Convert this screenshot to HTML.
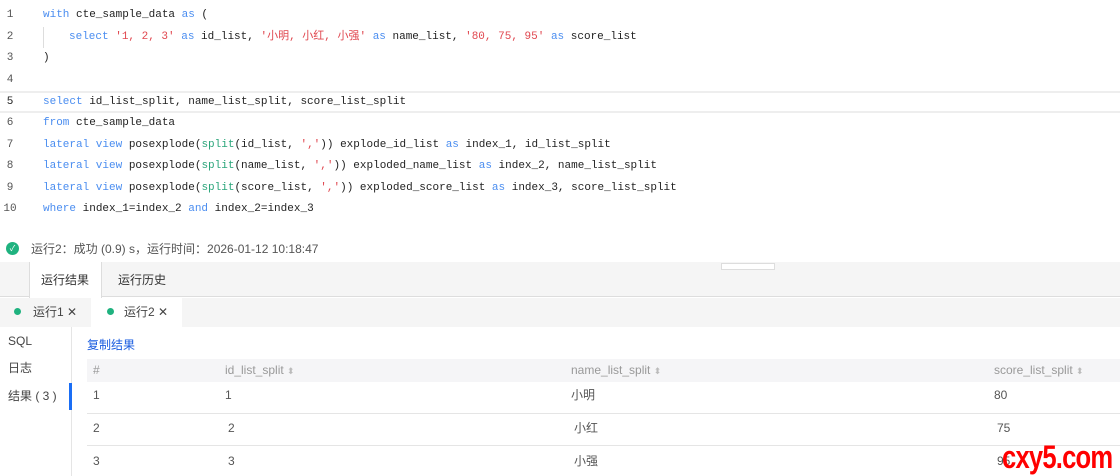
<!DOCTYPE html>
<html><head><meta charset="utf-8"><style>
*{margin:0;padding:0;box-sizing:border-box}
body{width:1120px;height:476px;overflow:hidden;background:#fff;font-family:"Liberation Sans","Noto Sans CJK SC",sans-serif;position:relative;color:#333}
.code{position:absolute;left:0;top:5px;width:1120px;font-family:"Liberation Mono","Noto Sans CJK SC",monospace;font-size:11px}
.ln{height:21.6px;line-height:21.6px;position:relative;white-space:pre;color:#222}
.ln .n{position:absolute;left:0;width:20px;text-align:center;color:#555}
.ln .t{position:absolute;left:43px}
.k{color:#4a8df0}.s{color:#e0474f}.f{color:#2aa57a}
.hl{border-top:2px solid #eee;border-bottom:2px solid #eee}
.a{position:absolute}
.gray{background:#f5f5f5}
.small{font-size:12px;line-height:16px;height:16px}
</style></head><body>
<div class="code">
<div class="ln"><span class="n">1</span><span class="t"><span class="k">with</span> cte_sample_data <span class="k">as</span> (</span></div>
<div class="ln"><span class="n">2</span><span class="t" style="border-left:1px solid #ddd;padding-left:25px"><span class="k">select</span> <span class="s">'1, 2, 3'</span> <span class="k">as</span> id_list, <span class="s">'小明, 小红, 小强'</span> <span class="k">as</span> name_list, <span class="s">'80, 75, 95'</span> <span class="k">as</span> score_list</span></div>
<div class="ln"><span class="n">3</span><span class="t">)</span></div>
<div class="ln"><span class="n">4</span><span class="t"></span></div>
<div class="ln hl" style="height:21.6px;line-height:18px"><span class="n" style="color:#222">5</span><span class="t"><span class="k">select</span> id_list_split, name_list_split, score_list_split</span></div>
<div class="ln"><span class="n">6</span><span class="t"><span class="k">from</span> cte_sample_data</span></div>
<div class="ln"><span class="n">7</span><span class="t"><span class="k">lateral view</span> posexplode(<span class="f">split</span>(id_list, <span class="s">','</span>)) explode_id_list <span class="k">as</span> index_1, id_list_split</span></div>
<div class="ln"><span class="n">8</span><span class="t"><span class="k">lateral view</span> posexplode(<span class="f">split</span>(name_list, <span class="s">','</span>)) exploded_name_list <span class="k">as</span> index_2, name_list_split</span></div>
<div class="ln"><span class="n">9</span><span class="t"><span class="k">lateral view</span> posexplode(<span class="f">split</span>(score_list, <span class="s">','</span>)) exploded_score_list <span class="k">as</span> index_3, score_list_split</span></div>
<div class="ln"><span class="n">10</span><span class="t"><span class="k">where</span> index_1=index_2 <span class="k">and</span> index_2=index_3</span></div>
</div>

<div class="a" style="left:6px;top:242px;width:13px;height:13px;border-radius:50%;background:#1fb27f;color:#fff;font-size:8px;text-align:center;line-height:13px">✓</div>
<div class="a small" style="left:31px;top:241px;color:#555">运行2：成功 (0.9) s，运行时间：2026-01-12 10:18:47</div>

<div class="a gray" style="left:0;top:262px;width:1120px;height:35px;border-bottom:1px solid #ddd"></div>
<div class="a" style="left:721px;top:263px;width:54px;height:7px;border:1px solid #ddd;background:#fff"></div>
<div class="a" style="left:29px;top:262px;width:73px;height:36px;background:#fff;border-left:1px solid #ddd;border-right:1px solid #ddd"></div>
<div class="a small" style="left:41px;top:272px;color:#333">运行结果</div>
<div class="a small" style="left:118px;top:272px;color:#333">运行历史</div>

<div class="a gray" style="left:0;top:298px;width:1120px;height:29px"></div>
<div class="a" style="left:91px;top:298px;width:91px;height:29px;background:#fff"></div>
<div class="a" style="left:14px;top:308px;width:7px;height:7px;border-radius:50%;background:#1fb27f"></div>
<div class="a small" style="left:33px;top:304px;color:#444">运行1 ✕</div>
<div class="a" style="left:107px;top:308px;width:7px;height:7px;border-radius:50%;background:#1fb27f"></div>
<div class="a small" style="left:124px;top:304px;color:#444">运行2 ✕</div>

<div class="a" style="left:71px;top:327px;width:1px;height:149px;background:#e5e5e5"></div>
<div class="a" style="left:69px;top:383px;width:3px;height:27px;background:#1a6ef5"></div>
<div class="a small" style="left:8px;top:333px;color:#444">SQL</div>
<div class="a small" style="left:8px;top:360px;color:#444">日志</div>
<div class="a small" style="left:8px;top:388px;color:#444">结果 ( 3 )</div>

<div class="a small" style="left:87px;top:337px;color:#1a5ce0">复制结果</div>
<div class="a" style="left:87px;top:359px;width:1033px;height:23px;background:#f5f5f7"></div>
<div class="a small" style="left:93px;top:362px;color:#999">#</div>
<div class="a small" style="left:225px;top:362px;color:#999">id_list_split <span style="color:#bbb;font-size:9px">⬍</span></div>
<div class="a small" style="left:571px;top:362px;color:#999">name_list_split <span style="color:#bbb;font-size:9px">⬍</span></div>
<div class="a small" style="left:994px;top:362px;color:#999">score_list_split <span style="color:#bbb;font-size:9px">⬍</span></div>

<div class="a" style="left:87px;top:413px;width:1033px;height:1px;background:#e5e5e5"></div>
<div class="a" style="left:87px;top:445px;width:1033px;height:1px;background:#e5e5e5"></div>
<div class="a small" style="left:93px;top:387px;color:#555">1</div><div class="a small" style="left:225px;top:387px;color:#555">1</div><div class="a small" style="left:571px;top:387px;color:#555">小明</div><div class="a small" style="left:994px;top:387px;color:#555">80</div>
<div class="a small" style="left:93px;top:420px;color:#555">2</div><div class="a small" style="left:228px;top:420px;color:#555">2</div><div class="a small" style="left:574px;top:420px;color:#555">小红</div><div class="a small" style="left:997px;top:420px;color:#555">75</div>
<div class="a small" style="left:93px;top:453px;color:#555">3</div><div class="a small" style="left:228px;top:453px;color:#555">3</div><div class="a small" style="left:574px;top:453px;color:#555">小强</div><div class="a small" style="left:997px;top:453px;color:#555">95</div>
<div class="a" style="left:1002px;top:440px;font-family:'Liberation Sans',sans-serif;font-weight:bold;font-size:32px;line-height:34px;color:#f00;letter-spacing:-1px;transform:scaleX(0.8);transform-origin:left">cxy5.com</div>
</body></html>
